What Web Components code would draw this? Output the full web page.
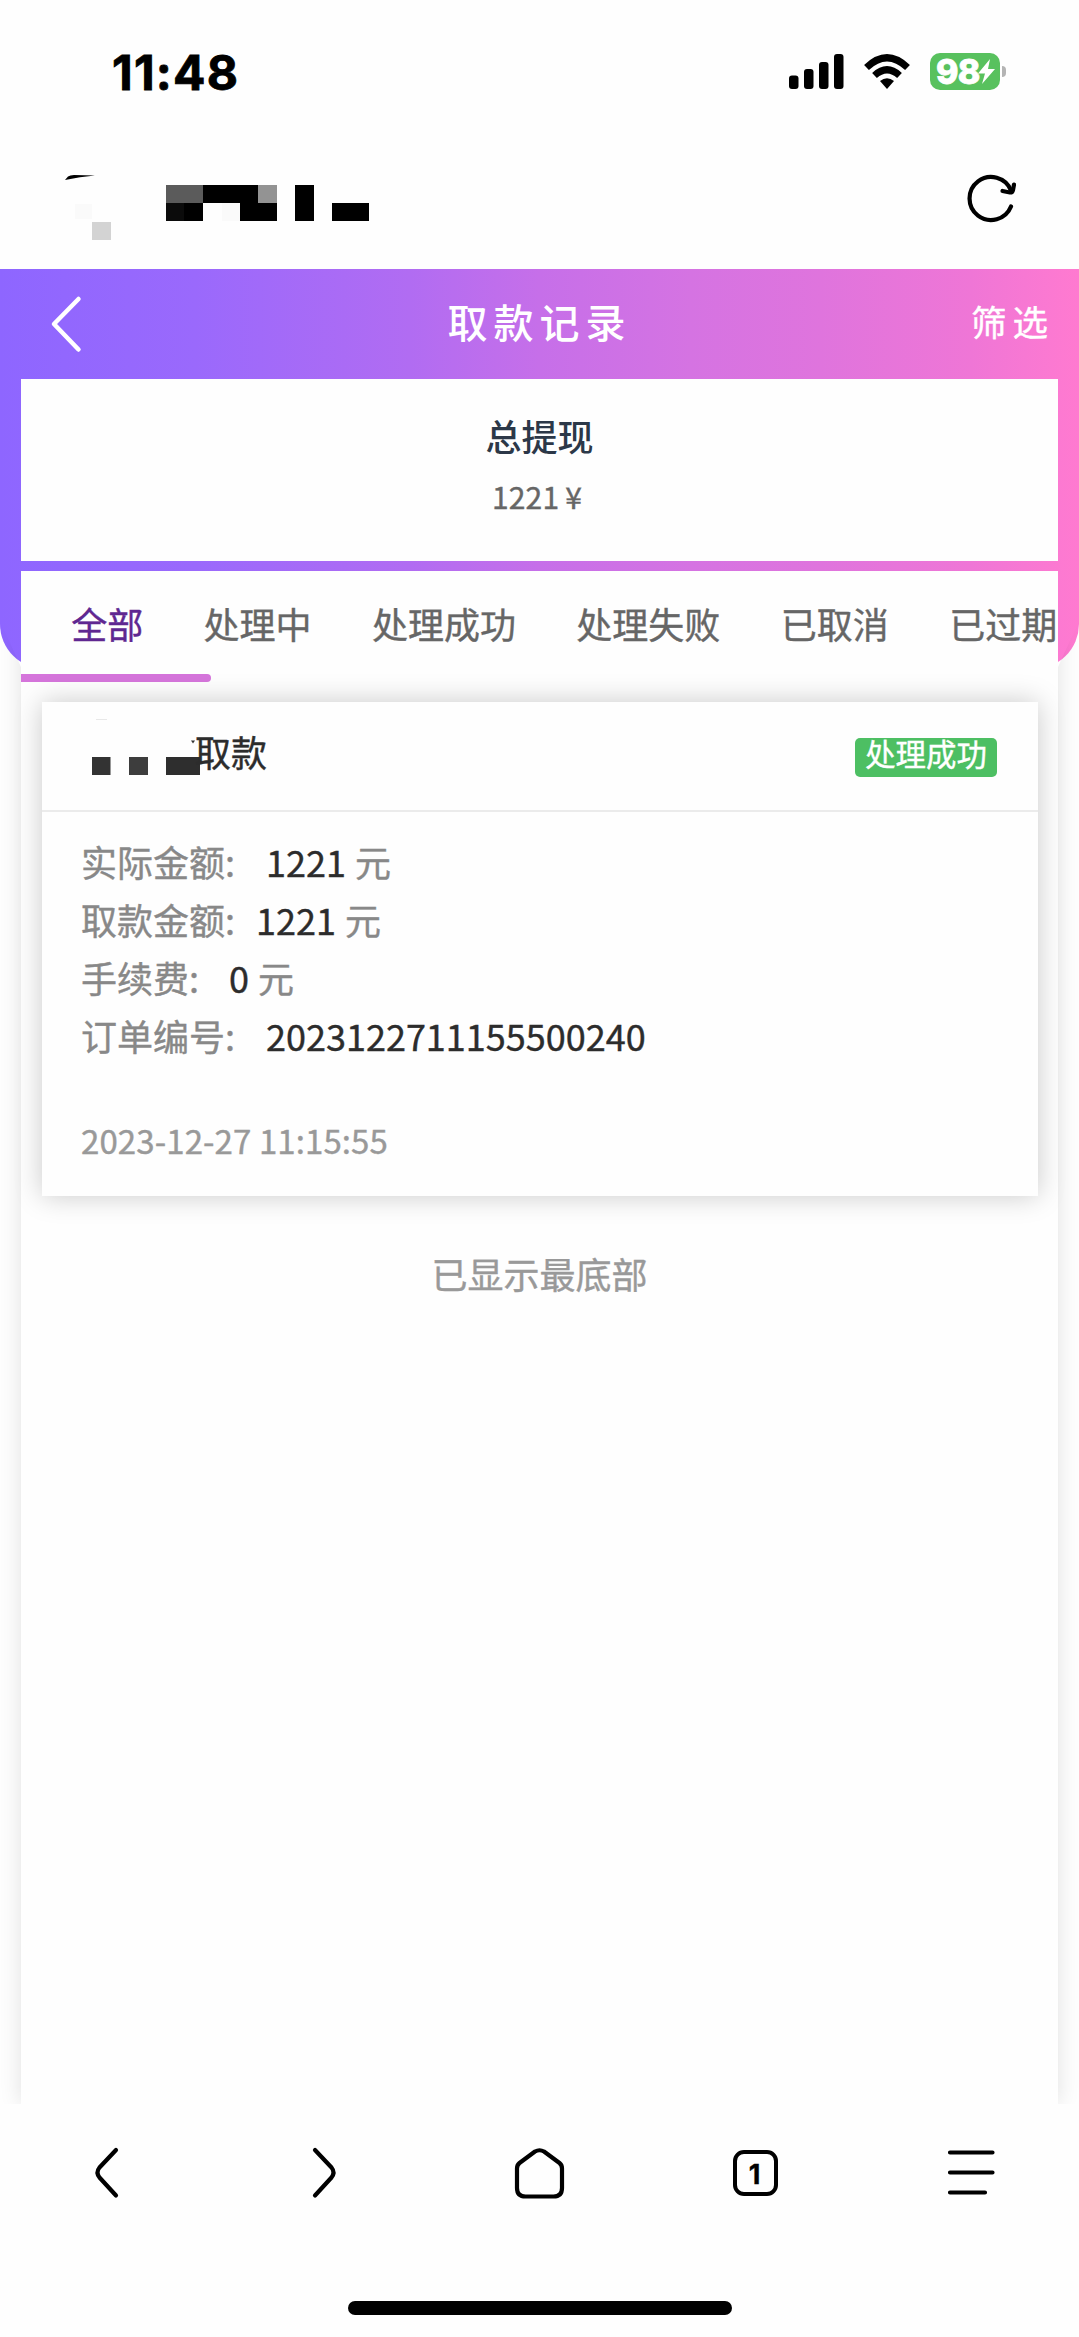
<!DOCTYPE html>
<html lang="zh-CN">
<head>
<meta charset="utf-8">
<meta name="viewport" content="width=device-width">
<title>取款记录</title>
<style>
html,body{margin:0;background:#fefefe}
body{font-family:"Noto Sans CJK SC","Noto Sans",sans-serif;color:#2c2c2c;-webkit-text-stroke:.4px}
</style>
</head>
<body>
<phone-screen>
  <status-bar slot="top" time="11:48" level="98"></status-bar>
  <address-bar slot="top"></address-bar>
  <title-bar action="筛选">取款记录</title-bar>
  <total-box label="总提现">1221 ¥</total-box>
  <record-panel>
    <tab-strip slot="tabs">
      <tab-item active>全部</tab-item><tab-item>处理中</tab-item><tab-item>处理成功</tab-item><tab-item>处理失败</tab-item><tab-item>已取消</tab-item><tab-item>已过期</tab-item>
    </tab-strip>
    <record-card status="处理成功" time="2023-12-27 11:15:55">
      <span slot="title">取款</span>
      <record-row label="实际金额:" unit="元" style="--gap:31px">1221</record-row>
      <record-row label="取款金额:" unit="元" style="--gap:21px">1221</record-row>
      <record-row label="手续费:" unit="元" style="--gap:30px">0</record-row>
      <record-row label="订单编号:" style="--gap:31px">2023122711155500240</record-row>
    </record-card>
    <span slot="end">已显示最底部</span>
  </record-panel>
  <browser-nav slot="bottom" tabs="1"></browser-nav>
</phone-screen>
<script>
const define = (name, render) => customElements.define(name, class extends HTMLElement {
  connectedCallback() {
    if (this.shadowRoot) return;
    const t = document.createElement('template');
    t.innerHTML = render(k => this.getAttribute(k) || '');
    this.attachShadow({ mode: 'open' }).append(t.content.cloneNode(true));
  }
});

define('phone-screen', () => `
<style>
:host{display:flex;flex-direction:column;width:1079px;height:2337px;background:#fefefe;overflow:hidden}
.app{display:grid;grid-template:100% / 100%;height:1835px;overflow:hidden}
.app>*{grid-area:1/1}
.hero{height:400px;border-radius:0 0 45px 45px;background:linear-gradient(90deg,#8e66ff 0,#9a69fc 18%,#b16cf2 38%,#c66fe9 50%,#d573e2 64%,#df74dd 76%,#ef76d6 90%,#ff7ad0 100%)}
.content{display:flex;flex-direction:column;min-height:0}
</style>
<slot name="top"></slot>
<div class="app"><div class="hero"></div><div class="content"><slot></slot></div></div>
<slot name="bottom"></slot>`);

define('status-bar', a => `
<style>
:host{display:flex;height:144px;box-sizing:border-box;padding:53px 73px 0 112px;justify-content:space-between;align-items:flex-start;color:#000;font-family:Inter,sans-serif}
.time{font-size:48px;font-weight:700;line-height:39px;letter-spacing:1.200px;-webkit-text-stroke:.8px}
.icons{display:flex;align-items:flex-start}
.net{margin-right:20px}
.bat{display:flex;align-items:center;height:37px}
.cell{width:70px;height:37px;border-radius:10px;background:#58c15e;display:flex;align-items:center;box-sizing:border-box;padding-left:6px}
.cell b{color:#fff;font-size:34px;line-height:37px;font-weight:800;letter-spacing:-.8px;-webkit-text-stroke:.8px}
.cell svg{margin-left:-2px;flex:none}
.nub{width:4px;height:11px;background:#b4b4b4;border-radius:0 4px 4px 0;margin-left:2px}
</style>
<div class="time">${a('time')}</div>
<div class="icons">
<svg class="net" width="121" height="37" viewBox="789 53 121 37">
<rect x="789" y="75.500" width="9.500" height="13.500" rx="3"/><rect x="804" y="69" width="9.500" height="20" rx="3"/><rect x="819" y="62" width="9.500" height="27" rx="3"/><rect x="834" y="54" width="9.500" height="35" rx="3"/>
<g fill="none" stroke="#000" stroke-width="7"><path d="M866.500 67.500Q887 48 907.500 67.500"/><path d="M874.500 75.500Q887 64 899.500 75.500"/></g>
<path d="M880 81Q887 75.500 894 81L887 89Z"/>
</svg>
<div class="bat"><div class="cell"><b>${a('level')}</b><svg width="19" height="27" viewBox="0 0 19 27"><path d="M13 1L1 15.500H8L5 26L18 11H11Z" fill="#fff"/></svg></div><div class="nub"></div></div>
</div>`);

define('address-bar', () => `
<style>
:host{display:flex;height:125px;box-sizing:border-box;justify-content:space-between;padding:29px 62px 0 64px;align-items:flex-start}
</style>
<svg width="310" height="70" viewBox="64 173 310 70" shape-rendering="crispEdges">
<path shape-rendering="auto" d="M65 180L68 176.500Q70 175 74 175L95 175.500Q80 176.500 65 180Z"/>
<rect x="75" y="204" width="17" height="15" fill="#fafafa"/><rect x="92" y="222" width="18.500" height="18" fill="#d3d3d3"/>
<rect x="166" y="185" width="37" height="18" fill="#5b5b5b"/><rect x="203" y="185" width="55" height="18"/><rect x="258" y="185" width="18.500" height="18" fill="#939393"/>
<rect x="166" y="203" width="18" height="18" fill="#0b0b0b"/><rect x="184" y="203" width="19" height="18"/><rect x="222" y="203" width="18" height="18" fill="#fafafa"/><rect x="240" y="203" width="36.500" height="18"/>
<rect x="295" y="185" width="19" height="36"/><rect x="332" y="203" width="37" height="18"/>
</svg>
<svg width="52" height="52" viewBox="965 173 52 52" fill="none" stroke="#000" stroke-width="4.200" stroke-linecap="round" stroke-linejoin="round">
<path d="M1011 206.500A21.500 21.500 0 1 1 1011 190.500"/><path d="M1002.500 191L1010 192.500Q1012.500 192.500 1013 190L1014 184.500"/>
</svg>`);

define('title-bar', a => `
<style>
:host{display:grid;grid-template-columns:200px 1fr 200px;height:110px;align-items:center;color:#fff}
svg{margin-left:50px}
.t{text-align:center;font-size:40px;line-height:60px;letter-spacing:6px;padding:0 0 6px 0;font-weight:500;-webkit-text-stroke:0}
.a{text-align:right;font-size:35.500px;line-height:54px;letter-spacing:6px;padding:0 25px 6px 0}
</style>
<svg width="34" height="58" viewBox="50 295 34 58" fill="none" stroke="#fff" stroke-width="4.500" stroke-linecap="round" stroke-linejoin="round"><path d="M78.500 299L54 324L78.500 349.500"/></svg>
<div class="t"><slot></slot></div><div class="a">${a('action')}</div>`);

define('total-box', a => `
<style>
:host{display:flex;flex-direction:column;align-items:center;height:182px;margin:0 21px 10px;box-sizing:border-box;padding-top:29px;background:#fefefe}
.l{font-size:36px;line-height:54px;color:#2c3848;font-weight:500;-webkit-text-stroke:0}
.v{font-size:30px;line-height:44px;color:#666;margin-top:12px;padding-right:5px;letter-spacing:.2px;word-spacing:-1px}
</style>
<div class="l">${a('label')}</div><div class="v"><slot></slot></div>`);

define('record-panel', () => `
<style>
:host{display:flex;flex-direction:column;flex:1;min-height:0;margin:0 21px;background:#fefefe;box-shadow:0 0 21px rgba(0,0,0,.12);clip-path:polygon(0 0,100% 0,100% 96px,calc(100% + 21px) 50px,calc(100% + 21px) 100%,-21px 100%,-21px 50px,0 96px)}
.end{align-self:center;margin-top:50px;font-size:36px;line-height:54px;color:#999}
</style>
<slot name="tabs"></slot><slot></slot><div class="end"><slot name="end"></slot></div>`);

define('tab-strip', () => `
<style>
:host{display:flex;flex-direction:column;height:111px;overflow:hidden}
.row{display:flex;height:103px;padding-left:20px}
.bar{width:190px;height:8px;border-radius:0 4px 4px 0;background:#d575db}
</style>
<div class="row"><slot></slot></div><div class="bar"></div>`);

define('tab-item', () => `
<style>
:host{flex:none;padding:25px 30.200px 0;font-size:36px;line-height:54px;color:#666;white-space:nowrap}
:host([active]){color:#5f2791}
</style><slot></slot>`);

define('record-card', a => `
<style>
:host{display:flex;flex-direction:column;margin:20px 20px 0 21px;height:494px;box-sizing:border-box;background:#fefefe;box-shadow:0 0 26px rgba(0,0,0,.21)}
.head{display:flex;justify-content:space-between;align-items:flex-start;height:110px;box-sizing:border-box;border-bottom:2px solid #ebebeb;padding:23px 41px 0 46px}
.title{display:flex;font-size:36px;line-height:54px;color:#2c2c2c}
.title slot{display:block;margin:-1px 0 0 -1px}
.tag{margin-top:13px;width:142px;height:39px;border-radius:5px;background:#4dbf63;color:#fff;font-size:30.400px;line-height:31px;text-align:center}
.rows{display:flex;flex-direction:column;padding:20px 39px 0}
time{margin:51px 0 0 39px;font-size:33px;line-height:50px;color:#999;letter-spacing:.1px}
</style>
<div class="head">
<div class="title"><svg width="108" height="54" viewBox="88 725 108 54" overflow="visible"><rect x="92" y="757" width="18.500" height="18" fill="#333"/><rect x="129" y="757" width="19" height="18" fill="#3d3d3d"/><rect x="166" y="757" width="34" height="18" fill="#2e2e2e"/><path d="M191 740.500H195L193 743.500Z" fill="#333"/><path d="M96 719.500H107" stroke="#e8e8e8"/></svg><slot name="title"></slot></div>
<div class="tag">${a('status')}</div>
</div>
<div class="rows"><slot></slot></div>
<time>${a('time')}</time>`);

define('record-row', a => `
<style>
:host{display:flex;height:58px;font-size:36px;line-height:58px;color:#888}
.v{color:#2c2c2c;margin-left:var(--gap);font-size:36px}
.u{margin-left:9px}
</style>
<span>${a('label')}</span><span class="v"><slot></slot></span>${a('unit') ? `<span class="u">${a('unit')}</span>` : ''}`);

define('browser-nav', a => `
<style>
:host{display:flex;flex-direction:column;align-items:center;height:233px;background:#fefefe;font-family:Inter,sans-serif;color:#000}
.row{display:grid;grid-template-columns:repeat(5,216px);justify-items:center;align-items:center;width:1080px;height:137px}
svg{fill:none;stroke:#000;stroke-width:4.200;stroke-linecap:round;stroke-linejoin:round;display:block}
.tabs{width:45.500px;height:46px;box-sizing:border-box;border:4.200px solid #000;border-radius:11px;display:flex;align-items:center;justify-content:center;font-size:27px;font-weight:700;margin-top:1px;padding:2px 2px 0 0}
.home{width:384px;height:14px;border-radius:7px;background:#000;margin-top:60px}
</style>
<div class="row">
<svg width="56" height="56" viewBox="81 2145 56 56"><path d="M117 2150L100.500 2167.500Q96.500 2172.500 100.500 2177.500L117 2195.500"/></svg>
<svg width="56" height="56" viewBox="296 2145 56 56"><path d="M315 2150L331.500 2167.500Q335.500 2172.500 331.500 2177.500L315 2195.500"/></svg>
<svg width="56" height="56" viewBox="512 2145 56 56"><path d="M535 2151.500L519.500 2163Q517 2165 517 2168.500V2188Q517 2196.500 525.500 2196.500H553.500Q562 2196.500 562 2188V2168.500Q562 2165 559.500 2163L544 2151.500Q539.500 2149 535 2151.500Z"/></svg>
<div class="tabs">${a('tabs')}</div>
<svg width="56" height="56" viewBox="944 2145 56 56"><path d="M950 2152.500H992.500M950 2172.500H992.500M950 2192.500H985"/></svg>
</div>
<div class="home"></div>`);
</script>
</body>
</html>
